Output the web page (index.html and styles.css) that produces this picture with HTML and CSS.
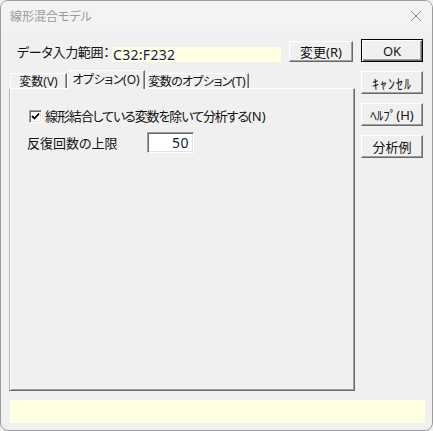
FILE: index.html
```html
<!DOCTYPE html>
<html lang="ja">
<head>
<meta charset="utf-8">
<title>線形混合モデル</title>
<link rel="stylesheet" href="styles.css">
</head>
<body>
<div class="window">
  <div class="titlebar">
    <span class="title">線形混合モデル</span>
    <svg class="close" width="12" height="12" viewBox="0 0 12 12"><path d="M1 1 L11 11 M11 1 L1 11" stroke="#8a8a8a" stroke-width="1" fill="none"/></svg>
  </div>
  <div class="body">
    <div class="main">
      <div class="left">
        <div class="range-row">
          <span class="range-label">データ入力範囲：</span>
          <span class="range-field">C32:F232</span>
          <button class="btn btn-change">変更<span class="mn">(R)</span></button>
        </div>
        <div class="tabs">
          <div class="tab tab-1">変数<span class="mn">(V)</span></div>
          <div class="tab tab-2 active">オプション<span class="mn">(O)</span></div>
          <div class="tab tab-3">変数のオプション<span class="mn">(T)</span></div>
        </div>
        <div class="panel">
          <div class="check-row">
            <span class="checkbox"><svg width="9" height="9" viewBox="0 0 9 9"><path d="M1 4 L3.5 6.5 L8 1.5" stroke="#000" stroke-width="1.8" fill="none"/></svg></span>
            <span class="check-label">線形結合している変数を除いて分析する<span class="mn">(N)</span></span>
          </div>
          <div class="field-row">
            <span class="field-label">反復回数の上限</span>
            <span class="num-input">50</span>
          </div>
        </div>
      </div>
      <div class="right">
        <button class="btn btn-side btn-default">OK</button>
        <button class="btn btn-side btn-cancel">ｷｬﾝｾﾙ</button>
        <button class="btn btn-side btn-help">ﾍﾙﾌﾟ<span class="mn">(H)</span></button>
        <button class="btn btn-side">分析例</button>
      </div>
    </div>
    <div class="status"></div>
  </div>
</div>
</body>
</html>
```
FILE: styles.css
```css
html, body {
  margin: 0;
  padding: 0;
  background: #f0f0f0;
}
* { box-sizing: border-box; }
body {
  font-family: "Noto Sans CJK JP", "Noto Sans", sans-serif;
  font-feature-settings: "palt";
  font-size: 13px;
  color: #111;
}
.mn {
  letter-spacing: 0;
  font-family: "Noto Sans", sans-serif;
}
.window {
  width: 433px;
  height: 431px;
  border: 1px solid #9c9c9c;
  border-radius: 8px;
  background: #f0f0f0;
  overflow: hidden;
  display: flex;
  flex-direction: column;
}
.titlebar {
  height: 30px;
  flex: 0 0 30px;
  display: flex;
  align-items: center;
  justify-content: space-between;
  padding: 0 10px 0 9px;
  background: #f3f3f3;
}
.title {
  font-size: 12px;
  color: #9a9a9a;
  line-height: 16px;
}
.close {
  display: block;
}
.body {
  flex: 1;
  display: flex;
  flex-direction: column;
  padding: 8px 9px 7px 8px;
}
.main {
  display: flex;
  height: 352px;
}
.left {
  width: 346px;
  display: flex;
  flex-direction: column;
}
.right {
  width: 62px;
  margin-left: 6px;
  display: flex;
  flex-direction: column;
  gap: 9px;
}
.range-row {
  height: 23px;
  display: flex;
  align-items: flex-end;
}
.range-label {
  flex: 0 0 103px;
  padding-left: 8px;
  line-height: 16px;
  margin-bottom: 2px;
  white-space: nowrap;
  letter-spacing: -0.3px;
}
.range-field {
  flex: 0 0 169px;
  height: 15px;
  line-height: 15px;
  background: #ffffe1;
  color: #101a60;
  padding-left: 1px;
  font-family: "Noto Sans", sans-serif;
  font-size: 14px;
  letter-spacing: 0.3px;
  white-space: nowrap;
}
.btn {
  font-family: inherit;
  font-feature-settings: "palt";
  font-size: 13px;
  color: #111;
  background: #f0f0f0;
  border: 1px solid;
  border-color: #ffffff #696969 #696969 #ffffff;
  box-shadow: inset -1px -1px 0 #a0a0a0;
  padding: 0;
  margin: 0;
  line-height: 16px;
  white-space: nowrap;
}
.btn-cancel {
  font-feature-settings: normal;
  font-size: 14px;
  letter-spacing: 1px;
}
.btn-help {
  font-feature-settings: normal;
  font-size: 13px;
}
.btn-change {
  flex: 0 0 64px;
  height: 21px;
  margin-left: 8px;
}
.btn-side {
  height: 23px;
  width: 62px;
}
.btn-default {
  border-color: #000;
  box-shadow: inset 1px 1px 0 #fff, inset -1px -1px 0 #696969, inset -2px -2px 0 #a0a0a0;
  font-family: "Noto Sans", sans-serif;
}
.tabs {
  margin-top: 8px;
  height: 18px;
  display: flex;
  align-items: flex-end;
  position: relative;
  z-index: 1;
}
.tab {
  height: 15px;
  line-height: 14px;
  font-size: 12px;
  border-top: 1px solid #fff;
  border-left: 1px solid #fff;
  border-right: 1px solid #696969;
  box-shadow: inset -1px 0 0 #a0a0a0;
  text-align: center;
  white-space: nowrap;
  background: #f0f0f0;
}
.tab-1 { width: 57px; margin-left: 1px; }
.tab-2 { width: 78px; letter-spacing: -0.4px; }
.tab-3 { width: 104px; letter-spacing: -0.6px; }
.tab.active {
  height: 19px;
  margin-bottom: -1px;
  line-height: 15px;
}
.panel {
  flex: 1;
  border-top: 1px solid #fff;
  border-left: 1px solid #b4b4b4;
  border-right: 1px solid #696969;
  border-bottom: 1px solid #696969;
  box-shadow: inset 1px 0 0 #fff, inset -1px -1px 0 #a0a0a0;
  padding: 19px 0 0 19px;
}
.check-row {
  display: flex;
  align-items: center;
  height: 16px;
}
.checkbox {
  width: 13px;
  height: 13px;
  flex: 0 0 13px;
  background: #fff;
  border: 1px solid;
  border-color: #a0a0a0 #fff #fff #a0a0a0;
  box-shadow: inset 1px 1px 0 #696969, inset -1px -1px 0 #e3e3e3;
  display: flex;
  align-items: center;
  justify-content: center;
}
.checkbox svg { display: block; }
.check-label {
  margin-left: 3px;
  line-height: 16px;
  white-space: nowrap;
  letter-spacing: -1.1px;
}
.field-row {
  display: flex;
  align-items: center;
  margin-top: 8px;
  margin-left: -2px;
  height: 21px;
}
.field-label {
  flex: 0 0 120px;
  line-height: 16px;
  white-space: nowrap;
}
.num-input {
  width: 47px;
  height: 21px;
  background: #fff;
  border: 1px solid;
  border-color: #a0a0a0 #fff #fff #a0a0a0;
  box-shadow: inset 1px 1px 0 #696969, inset -1px -1px 0 #e3e3e3;
  text-align: right;
  padding-right: 4px;
  line-height: 19px;
  font-family: "Noto Sans", sans-serif;
  font-size: 14px;
  letter-spacing: 0.5px;
  color: #101a40;
}
.status {
  margin-top: 9px;
  height: 23px;
  margin-right: -2px;
  margin-left: 1px;
  background: #ffffe1;
}
```
